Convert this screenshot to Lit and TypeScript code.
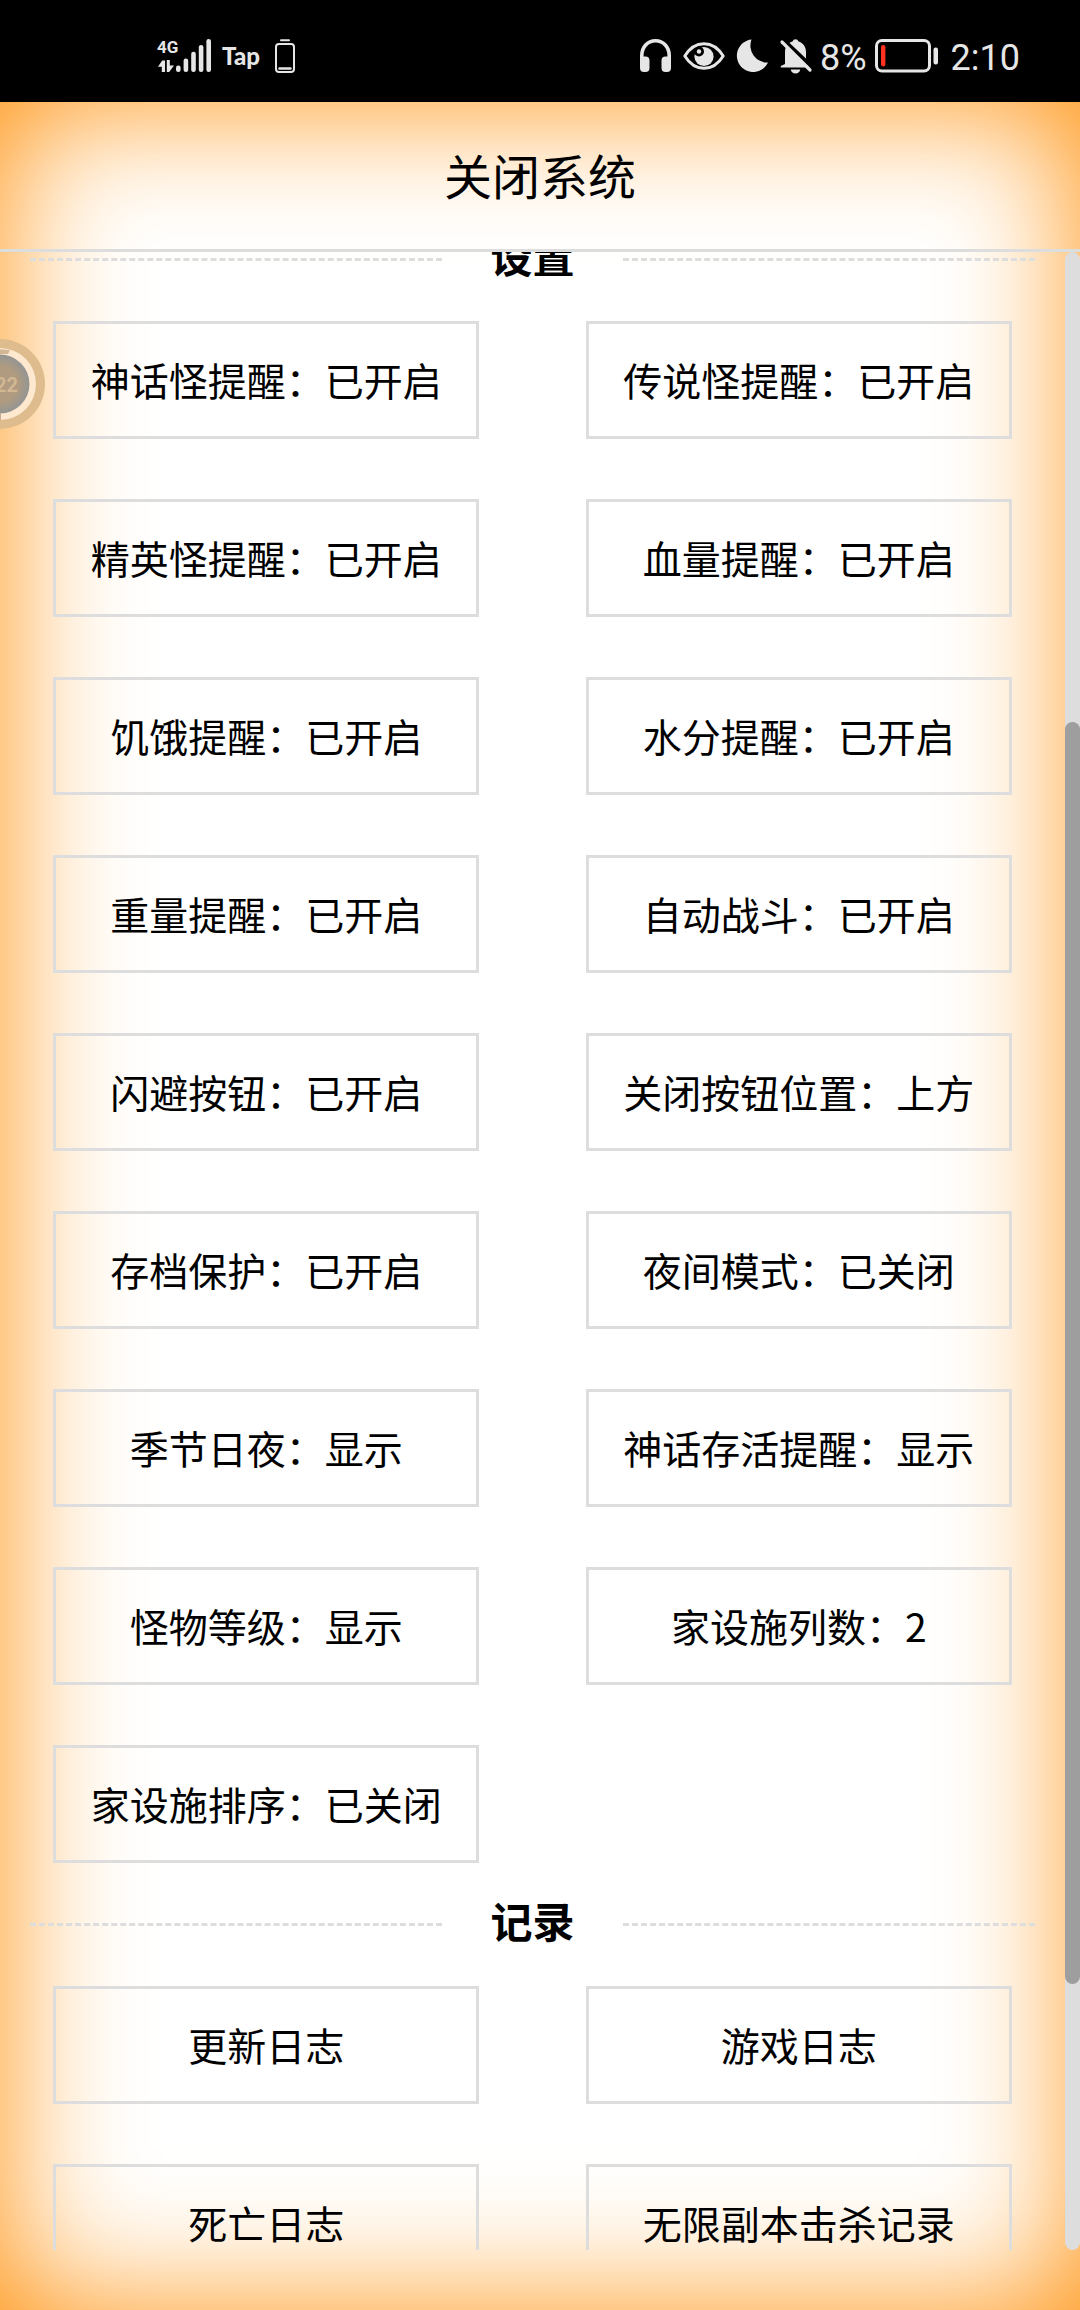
import { LitElement, html, css } from "lit";
import { customElement, property, query } from "lit/decorators.js";

interface Option {
  label: string;
  value?: string;
}

interface Section {
  title: string;
  options: Option[];
}

const SECTIONS: Section[] = [
  {
    title: "设置",
    options: [
      { label: "神话怪提醒", value: "已开启" },
      { label: "传说怪提醒", value: "已开启" },
      { label: "精英怪提醒", value: "已开启" },
      { label: "血量提醒", value: "已开启" },
      { label: "饥饿提醒", value: "已开启" },
      { label: "水分提醒", value: "已开启" },
      { label: "重量提醒", value: "已开启" },
      { label: "自动战斗", value: "已开启" },
      { label: "闪避按钮", value: "已开启" },
      { label: "关闭按钮位置", value: "上方" },
      { label: "存档保护", value: "已开启" },
      { label: "夜间模式", value: "已关闭" },
      { label: "季节日夜", value: "显示" },
      { label: "神话存活提醒", value: "显示" },
      { label: "怪物等级", value: "显示" },
      { label: "家设施列数", value: "2" },
      { label: "家设施排序", value: "已关闭" },
    ],
  },
  {
    title: "记录",
    options: [
      { label: "更新日志" },
      { label: "游戏日志" },
      { label: "死亡日志" },
      { label: "无限副本击杀记录" },
    ],
  },
];

@customElement("status-bar")
export class StatusBar extends LitElement {
  static styles = css`
    :host {
      display: flex;
      justify-content: space-between;
      align-items: center;
      box-sizing: border-box;
      height: 102px;
      padding: 10px 60px 0 158px;
      background: #000;
      color: #e6e6e6;
      font-family: Roboto, "Noto Sans CJK SC", sans-serif;
      font-size: 36px;
      line-height: 44px;
    }
    .group {
      display: flex;
      align-items: center;
      gap: 12px;
    }
    .clock {
      padding-top: 3px;
    }
    .power {
      display: flex;
      align-items: center;
      gap: 8px;
    }
    .carrier {
      margin-left: -2px;
      font-family: Lato, sans-serif;
      font-size: 24px;
      font-weight: 900;
      line-height: 24px;
      padding-right: 3px;
    }
    .net {
      font: 700 17px Roboto, sans-serif;
    }
    svg {
      display: block;
      flex: none;
      overflow: visible;
    }
  `;

  render() {
    return html`
      <div class="group">
        <svg width="54" height="34" viewBox="0 0 54 34" fill="#e6e6e6" aria-hidden="true">
          <text class="net" x="-1" y="14">4G</text>
          <path d="M4.2 21.500h2.800V33H3.800v-5.200H0zM8.800 21h3v5.400H16L11.200 33H8.800z" />
          <rect x="18" y="26.500" width="4.600" height="6.500" rx="2.200" />
          <rect x="25.600" y="19.500" width="4.600" height="13.500" rx="2.200" />
          <rect x="33.200" y="12.800" width="4.600" height="20.200" rx="2.200" />
          <rect x="40.800" y="6" width="4.600" height="27" rx="2.200" />
          <rect x="48.400" y="0" width="4.600" height="33" rx="2.200" />
        </svg>
        <span class="carrier">Tap</span>
        <svg width="20" height="34" viewBox="0 0 20 34" fill="none" stroke="#e6e6e6" aria-hidden="true">
          <path d="M6 1.300h8" stroke-width="2" stroke-linecap="round" />
          <rect x="1" y="5" width="18" height="28" rx="3" stroke-width="2" />
          <path d="M4.500 29.500h11" stroke-width="2.400" stroke-linecap="round" />
        </svg>
      </div>
      <div class="group">
        <svg width="31" height="34" viewBox="0 0 31 34" aria-hidden="true">
          <path d="M1.800 24V16.500C1.800 8 7.500 1.800 15.500 1.800S29.200 8 29.200 16.500V24" fill="none" stroke="#e6e6e6" stroke-width="3.600" />
          <path d="M0 17.500h5.500a4 4 0 0 1 4 4v7.500a4 4 0 0 1-4 4H4a4 4 0 0 1-4-4zM31 17.500h-5.500a4 4 0 0 0-4 4v7.500a4 4 0 0 0 4 4H27a4 4 0 0 0 4-4z" fill="#e6e6e6" />
        </svg>
        <svg width="42" height="28" viewBox="0 0 42 28" aria-hidden="true">
          <path d="M1.800 14C7 5.500 13 1.700 21 1.700S35 5.500 40.200 14C35 22.500 29 26.300 21 26.300S7 22.500 1.800 14z" fill="none" stroke="#e6e6e6" stroke-width="3" stroke-linejoin="round" />
          <circle cx="21" cy="14.500" r="9.600" fill="#e6e6e6" />
          <circle cx="16" cy="9.500" r="5" fill="#000" />
          <circle cx="16" cy="9.500" r="2.200" fill="#e6e6e6" />
        </svg>
        <svg width="31" height="34" viewBox="0 0 31 34" aria-hidden="true">
          <path d="M14.500.500A17 17 0 0 0 31 23.500A16.300 16.300 0 1 1 14.500.500z" fill="#e6e6e6" />
        </svg>
        <div class="power">
          <svg width="32" height="34" viewBox="0 0 32 34" aria-hidden="true">
            <path d="M5 25V13C5 7 8.500 3.500 12.500 2.400A3.200 3.200 0 0 1 18.500 2.400C23 3.700 26 7.500 26 13v8l3.500 7.500H.800V27z" fill="#e6e6e6" />
            <path d="M10.800 30.500h9.400a4.700 4 0 0 1-9.400 0z" fill="#e6e6e6" />
            <path d="M3.500 1L33.500 29.500" stroke="#000" stroke-width="4" />
            <path d="M2 3L30 31" stroke="#e6e6e6" stroke-width="3.200" stroke-linecap="round" />
          </svg>
          <span class="clock">8%</span>
          <svg width="64" height="34" viewBox="0 0 64 34" aria-hidden="true">
            <rect x="1.500" y="1.500" width="53" height="30.500" rx="5.500" fill="none" stroke="#e6e6e6" stroke-width="3" />
            <rect x="6" y="6" width="4.400" height="21.500" rx="2.200" fill="#ff3120" />
            <rect x="58.500" y="8.500" width="4.500" height="17" rx="2" fill="#e6e6e6" />
          </svg>
        </div>
        <span class="clock">2:10</span>
      </div>
    `;
  }
}

@customElement("option-section")
export class OptionSection extends LitElement {
  @property({ attribute: false }) section!: Section;

  static styles = css`
    :host {
      display: block;
    }
    .heading {
      display: flex;
      align-items: center;
      justify-content: space-between;
      height: 123px;
      padding: 0 30px;
    }
    .rule {
      width: 41%;
      border-top: 3px dashed #ddd;
    }
    .title {
      margin: 0;
      padding-bottom: 10px;
      font-size: 42px;
      font-weight: 700;
      line-height: 60px;
    }
    .grid {
      display: grid;
      grid-template-columns: 40% 40%;
      justify-content: space-around;
      row-gap: 60px;
    }
    .option {
      box-sizing: border-box;
      min-width: 0;
      margin: 0;
      padding: 26px 0 28px;
      border: 3px solid #ddd;
      background: none;
      color: #000;
      font: inherit;
      font-size: 39px;
      line-height: 58px;
      text-align: center;
      white-space: nowrap;
    }
  `;

  render() {
    return html`
      <div class="heading">
        <span class="rule"></span>
        <h2 class="title">${this.section.title}</h2>
        <span class="rule"></span>
      </div>
      <div class="grid">
        ${this.section.options.map(
          (o) => html`<button class="option" type="button">${o.value ? `${o.label}：${o.value}` : o.label}</button>`
        )}
      </div>
    `;
  }
}

@customElement("app-root")
export class AppRoot extends LitElement {
  @query(".list") private list!: HTMLElement;

  static styles = css`
    :host {
      display: flex;
      flex-direction: column;
      height: 100vh;
      overflow: hidden;
      background: #fff;
      color: #000;
      font-family: "Noto Sans CJK SC", sans-serif;
    }
    .panel {
      position: relative;
      display: flex;
      flex-direction: column;
      flex: 1;
      min-height: 0;
      box-sizing: border-box;
      padding-bottom: 60px;
      box-shadow: inset 0 0 135px #ff8f08;
    }
    .close {
      margin: 0;
      padding: 38px 0 41px;
      border: 0;
      border-bottom: 3px solid #ddd;
      background: none;
      color: #000;
      font: inherit;
      font-size: 48px;
      line-height: 68px;
    }
    .body {
      display: flex;
      flex: 1;
      min-height: 0;
    }
    .list {
      flex: 1;
      min-width: 0;
      overflow-y: auto;
      scrollbar-width: none;
    }
    .end {
      height: 60px;
    }
    .track {
      display: flex;
      flex-direction: column;
      width: 15px;
      border-radius: 8px;
      background: #ddd;
    }
    .before {
      height: 23.5%;
    }
    .thumb {
      height: 63.2%;
      border-radius: 8px;
      background: #9e9e9e;
    }
    .floating {
      position: absolute;
      left: -45px;
      top: 237px;
      width: 90px;
      height: 90px;
      margin: 0;
      padding: 0;
      border: 0;
      background: none;
    }
    .ball {
      display: block;
    }
    .count {
      font: 700 20px Roboto, sans-serif;
    }
  `;

  firstUpdated() {
    requestAnimationFrame(() => {
      this.list.scrollTop = 54;
    });
  }

  render() {
    return html`
      <status-bar></status-bar>
      <main class="panel" lang="zh-CN">
        <button class="close" type="button">关闭系统</button>
        <div class="body">
          <div class="list">
            ${SECTIONS.map((s) => html`<option-section .section=${s}></option-section>`)}
            <div class="end"></div>
          </div>
          <div class="track">
            <div class="before"></div>
            <div class="thumb"></div>
          </div>
        </div>
        <button class="floating" type="button">
          <svg class="ball" width="90" height="90" viewBox="-45 -45 90 90">
            <defs>
              <radialGradient id="core">
                <stop offset="0.6" stop-color="#b09b80" />
                <stop offset="1" stop-color="#929593" />
              </radialGradient>
            </defs>
            <circle r="45" fill="#dfbc8e" />
            <circle r="36" fill="#ffe8d0" />
            <path d="M-2 -35L10 -34L8 -30H-2z" fill="#d3b896" />
            <circle r="29.500" fill="url(#core)" />
            <path d="M0 29v7" stroke="#c4ae92" stroke-width="2" />
            <text class="count" x="-5" y="8" fill="#d2b793">22</text>
          </svg>
        </button>
      </main>
    `;
  }
}
